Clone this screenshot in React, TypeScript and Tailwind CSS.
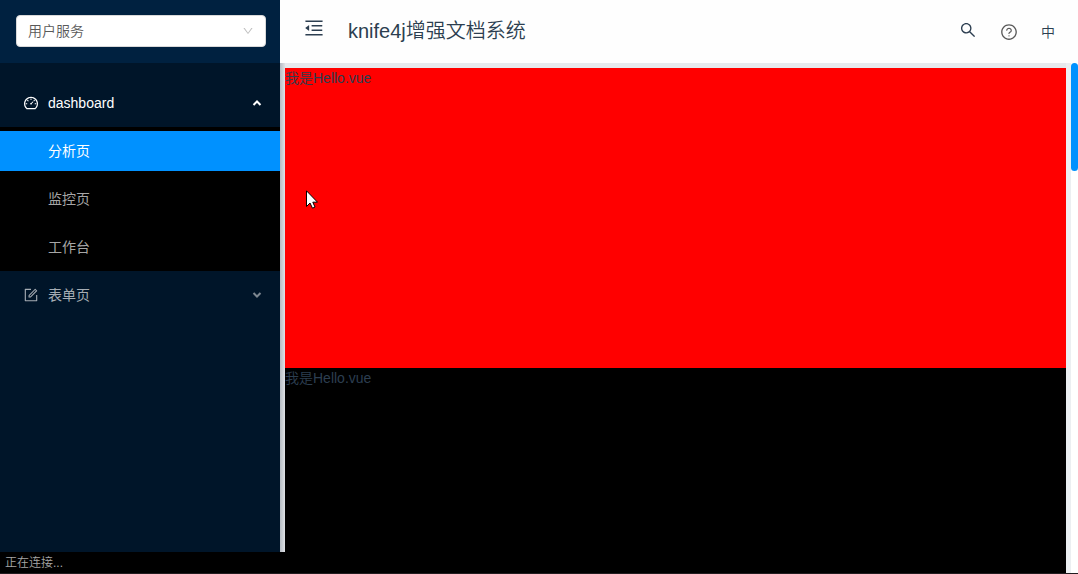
import { useState } from "react";
import {
  AiOutlineDashboard,
  AiOutlineDown,
  AiOutlineForm,
  AiOutlineMenuFold,
  AiOutlineQuestionCircle,
  AiOutlineSearch,
} from "react-icons/ai";

const pages = ["分析页", "监控页", "工作台"];

function Caret({ up = false }: { up?: boolean }) {
  return (
    <svg
      className={up ? "ml-auto size-2.5" : "ml-auto size-2.5 text-[#7d8790]"}
      viewBox="0 0 10 10"
      fill="none"
      stroke="currentColor"
      strokeWidth="2"
      aria-hidden="true"
    >
      <path d={up ? "M1.5 7 L5 3.5 L8.5 7" : "M1.5 3 L5 6.5 L8.5 3"} />
    </svg>
  );
}

function Sidebar() {
  const [active, setActive] = useState(pages[0]);
  return (
    <aside className="flex w-[280px] shrink-0 flex-col bg-[#001529]">
      <div className="flex h-[63px] shrink-0 items-center bg-[#002140] pr-3.5 pb-px pl-4">
        <div className="grid w-full items-center">
          <select
            aria-label="服务"
            className="col-start-1 row-start-1 h-8 w-full appearance-none rounded border border-[#d9d9d9] bg-white px-[11px] text-sm font-[350] text-[#595959]"
          >
            <option>用户服务</option>
          </select>
          <AiOutlineDown className="pointer-events-none col-start-1 row-start-1 mr-3 size-3 justify-self-end text-[#bfbfbf]" />
        </div>
      </div>
      <nav className="flex flex-col pt-4 text-sm text-[#a6adb4]">
        <button type="button" aria-expanded="true" className="flex h-12 items-center gap-2 pr-[18px] pl-[23px] text-white">
          <AiOutlineDashboard className="size-4" />
          <span className="pl-px">dashboard</span>
          <Caret up />
        </button>
        <ul className="flex flex-col gap-2 bg-black py-1">
          {pages.map((page) => (
            <li key={page}>
              <a
                href="#"
                onClick={() => setActive(page)}
                className={
                  page === active
                    ? "flex h-10 items-center bg-[#0091ff] pl-12 text-white"
                    : "flex h-10 items-center pl-12 text-[#a6a6a6]"
                }
              >
                {page}
              </a>
            </li>
          ))}
        </ul>
        <button type="button" aria-expanded="false" className="flex h-12 items-center gap-2 pr-[18px] pl-[23px]">
          <AiOutlineForm className="size-4" />
          <span className="pl-px">表单页</span>
          <Caret />
        </button>
      </nav>
    </aside>
  );
}

function Header() {
  return (
    <header className="flex h-[63px] shrink-0 items-center bg-[#fefefe] px-[23px] pb-0.5 text-[#2c3e50]">
      <button type="button" aria-label="收起菜单" className="pb-1.5">
        <AiOutlineMenuFold className="size-[22px]" />
      </button>
      <h1 className="ml-[23px] text-xl font-[350]">knife4j增强文档系统</h1>
      <div className="ml-auto flex items-center gap-[23px] pt-0.5 text-sm">
        <button type="button" aria-label="搜索" className="pb-1">
          <AiOutlineSearch className="size-[18px]" />
        </button>
        <button type="button" aria-label="帮助">
          <AiOutlineQuestionCircle className="size-[18px] text-[#595959]" />
        </button>
        <button type="button" className="w-3.5 font-[350]">中</button>
      </div>
    </header>
  );
}

export default function App() {
  return (
    <div className="relative flex h-screen overflow-hidden bg-[#f0f2f5] font-['Liberation_Sans','Noto_Sans_CJK_SC',sans-serif]">
      <Sidebar />
      <div className="flex min-w-0 grow flex-col">
        <Header />
        <div className="flex min-h-0 grow">
          <div className="w-[5px] shrink-0 bg-linear-to-r from-[#b5bbc3] to-[#dfe2e6]" />
          <main className="min-w-0 grow overflow-hidden border-t-[5px] border-[#e6e9ed] text-sm font-[350] text-[#2c3e50]">
            <section className="h-[300px] bg-[#ff0000]">我是Hello.vue</section>
            <section className="h-[300px] bg-black">我是Hello.vue</section>
          </main>
          <div className="w-[5px] shrink-0 bg-[#eceff2]" />
          <div className="w-[7px] shrink-0 bg-white">
            <div className="h-[108px] rounded bg-[#0091ff]" />
          </div>
        </div>
      </div>
      <div className="absolute bottom-0 left-0 h-[22px] w-[285px] bg-black pl-[5px] text-xs leading-[22px] font-[350] text-[#a6a6a6]">
        正在连接...
      </div>
      <div className="absolute bottom-0 left-0 h-px w-full bg-[#211d20]" />
      <svg className="absolute top-[190px] left-[306px] h-5 w-3" viewBox="0 0 12 20" aria-hidden="true">
        <path d="M.5 .8 V16.5 L4 13 L6.5 18.2 L9 17 L6.8 12.2 H11.5 Z" fill="white" stroke="black" />
      </svg>
    </div>
  );
}
